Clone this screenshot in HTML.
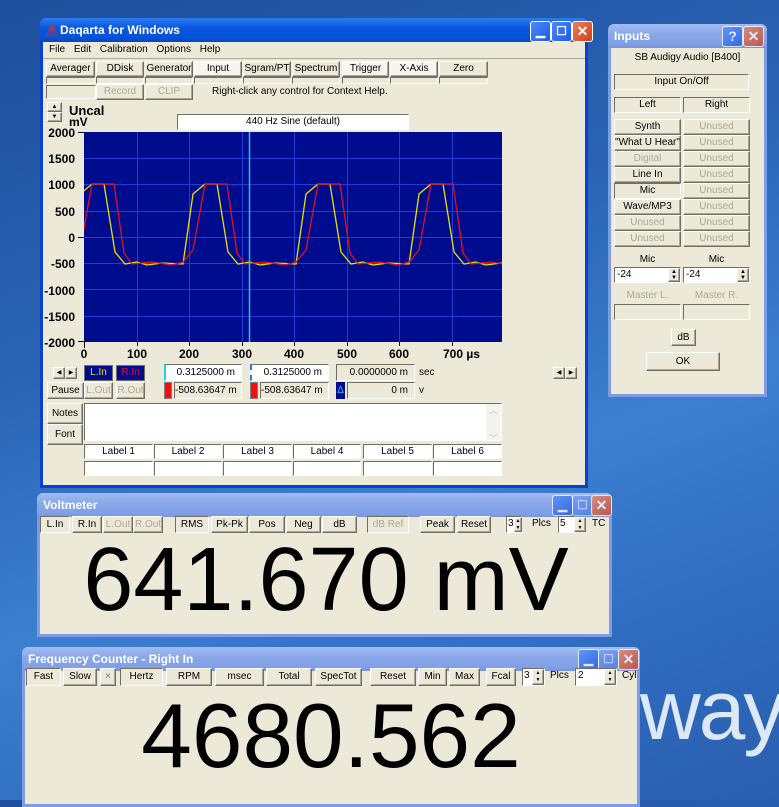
<!DOCTYPE html>
<html><head><meta charset="utf-8">
<style>
*{margin:0;padding:0;box-sizing:border-box}
body{width:779px;height:800px;overflow:hidden;position:relative;font-family:"Liberation Sans",sans-serif;font-size:10px;color:#000;
background:linear-gradient(160deg,#1e4f9c 0%,#2a63b4 35%,#3c7fd0 60%,#2f6cc0 80%,#2a5fae 100%)}
.a{position:absolute}
.win{position:absolute;background:#ece9d8;border:3px solid #0841d0;border-top:none;border-radius:6px 6px 0 0}
.iwin{border-color:#7d9ce4}
.tb{position:absolute;left:-3px;right:-3px;top:0;height:24px;border-radius:6px 6px 0 0;background:linear-gradient(#2c7cf0,#0a58e0 40%,#0550d8 85%,#0a44b8);color:#fff;font-weight:bold;font-size:12px;padding:5px 0 0 20px}
.itb{background:linear-gradient(#a2bcf0,#8aa8ea 40%,#819fe6 85%,#7894d8);color:#e4ecfa}
.b{position:absolute;background:#ece9d8;border:1px solid;border-color:#fff #716f64 #716f64 #fff;box-shadow:inset -1px -1px 0 #aca899;text-align:center;font-size:10px;line-height:14px;white-space:nowrap;overflow:hidden}
.lt{background:#f6f5ef}
.dis{color:#aca899}
.sk{position:absolute;border:1px solid;border-color:#716f64 #fff #fff #716f64;background:#ece9d8;font-size:10px;text-align:center;line-height:13px;white-space:nowrap}
.wh{background:#fff}
.cb{position:absolute;width:21px;height:21px;border:1px solid #fff;border-radius:3px;background:linear-gradient(135deg,#4d8af8,#1a5ae8);color:#fff;font-weight:bold;text-align:center;line-height:18px;font-size:14px}
.cx{background:linear-gradient(135deg,#e8805c,#d0401c)}
.icb{opacity:.75}
.yl{position:absolute;right:704px;font-weight:bold;font-size:12px;text-align:right}
.xl{position:absolute;top:347px;font-weight:bold;font-size:12px;width:40px;text-align:center}
</style></head><body>

<div class="a" style="left:640px;top:662px;font-size:84px;color:#dde8f6;letter-spacing:-2px">way</div>

<!-- MAIN WINDOW -->
<div class="win" style="left:40px;top:18px;width:548px;height:470px">
 <div class="tb">Daqarta for Windows</div>
</div>
<div class="a" style="left:45px;top:23px;width:14px;height:14px;background:linear-gradient(#e03020,#2050c0);clip-path:polygon(50% 0,100% 100%,0 100%)"></div>
<div class="cb" style="left:530px;top:21px;font-size:12px">▁</div>
<div class="cb" style="left:551px;top:21px;font-size:12px">☐</div>
<div class="cb cx" style="left:572px;top:21px">✕</div>
<div class="a" style="left:49px;top:44px;font-size:10px;word-spacing:6px">File Edit Calibration Options Help</div>
<div class="a" style="left:43px;top:58px;width:542px;height:1px;background:#aca899"></div>

<div class="b" style="left:46px;top:61px;width:49px;height:16px">Averager</div>
<div class="b" style="left:96px;top:61px;width:48px;height:16px">DDisk</div>
<div class="b" style="left:145px;top:61px;width:48px;height:16px">Generator</div>
<div class="b lt" style="left:194px;top:61px;width:48px;height:16px">Input</div>
<div class="b" style="left:243px;top:61px;width:48px;height:16px">Sgram/PT</div>
<div class="b" style="left:292px;top:61px;width:48px;height:16px">Spectrum</div>
<div class="b lt" style="left:342px;top:61px;width:47px;height:16px">Trigger</div>
<div class="b lt" style="left:390px;top:61px;width:48px;height:16px">X-Axis</div>
<div class="b" style="left:439px;top:61px;width:49px;height:16px">Zero</div>
<div class="sk" style="left:46px;top:77px;width:49px;height:7px"></div>
<div class="sk" style="left:96px;top:77px;width:48px;height:7px"></div>
<div class="sk" style="left:145px;top:77px;width:48px;height:7px"></div>
<div class="sk" style="left:194px;top:77px;width:48px;height:7px"></div>
<div class="sk" style="left:243px;top:77px;width:48px;height:7px"></div>
<div class="sk" style="left:292px;top:77px;width:48px;height:7px"></div>
<div class="sk" style="left:342px;top:77px;width:47px;height:7px"></div>
<div class="sk" style="left:390px;top:77px;width:48px;height:7px"></div>
<div class="sk" style="left:439px;top:77px;width:49px;height:7px"></div>
<div class="sk" style="left:46px;top:85px;width:50px;height:14px"></div>
<div class="b dis" style="left:96px;top:84px;width:48px;height:16px">Record</div>
<div class="b dis" style="left:145px;top:84px;width:48px;height:16px">CLIP</div>
<div class="a" style="left:212px;top:86px">Right-click any control for Context Help.</div>

<div class="b" style="left:47px;top:102px;width:15px;height:10px;font-size:6px;line-height:8px">▲</div>
<div class="b" style="left:47px;top:112px;width:15px;height:10px;font-size:6px;line-height:8px">▼</div>
<div class="a" style="left:69px;top:103px;font-weight:bold;font-size:13px">Uncal</div>
<div class="a" style="left:69px;top:115px;font-weight:bold;font-size:12px">mV</div>
<div class="sk wh" style="left:177px;top:114px;width:232px;height:16px;line-height:14px;font-size:10px">440 Hz Sine (default)</div>

<div class="yl" style="top:126px">2000</div>
<div class="yl" style="top:152px">1500</div>
<div class="yl" style="top:178px">1000</div>
<div class="yl" style="top:205px">500</div>
<div class="yl" style="top:231px">0</div>
<div class="yl" style="top:257px">-500</div>
<div class="yl" style="top:284px">-1000</div>
<div class="yl" style="top:310px">-1500</div>
<div class="yl" style="top:336px">-2000</div>

<svg class="a" style="left:0;top:0" width="779" height="800">
 <defs><clipPath id="c"><rect x="84" y="132" width="418" height="210"/></clipPath></defs>
 <rect x="84" y="132" width="418" height="210" fill="#000c8e"/>
 <g stroke="#1e3cd6" stroke-width="1">
  <path d="M84 158.5H502M84 184.5H502M84 211.5H502M84 237.5H502M84 263.5H502M84 289.5H502M84 316.5H502"/>
  <path d="M137.5 132V342M189.5 132V342M242.5 132V342M294.5 132V342M347.5 132V342M399.5 132V342M452.5 132V342"/>
 </g>
 <g stroke="#000" stroke-width="1"><path d="M78 132.5H84M78 237.5H84M78 341.5H84M84.5 342V348M137.5 342V346M189.5 342V346M242.5 342V346M294.5 342V346M347.5 342V346M399.5 342V346M452.5 342V346"/></g>
 <g clip-path="url(#c)" fill="none" stroke-width="1.3">
  <polyline stroke="#e8e000" points="60,184 70,264 80,194 92,184 104,184 115,252 125,264 137,262 147,265 162,263 183,264 193,194 205,184 217,184 228,252 238,264 250,262 260,265 275,263 296,264 306,194 318,184 330,184 341,252 351,264 363,262 373,265 388,263 409,264 419,194 431,184 443,184 454,252 464,264 476,262 486,265 501,263 522,264"/>
  <polyline stroke="#e01020" points="74,264 80,250 92,184 114,184 124,253 132,264 152,262 172,265 183,262 193,250 205,184 227,184 237,253 245,264 265,262 285,265 296,262 306,250 318,184 340,184 350,253 358,264 378,262 398,265 409,262 419,250 431,184 453,184 463,253 471,264 491,262 511,265"/>
  <path d="M249.5 132V342" stroke="#20c0e8" stroke-width="1.5"/>
 </g>
</svg>
<div class="xl" style="left:64px">0</div>
<div class="xl" style="left:117px">100</div>
<div class="xl" style="left:169px">200</div>
<div class="xl" style="left:222px">300</div>
<div class="xl" style="left:274px">400</div>
<div class="xl" style="left:327px">500</div>
<div class="xl" style="left:379px">600</div>
<div class="a" style="left:443px;top:347px;font-weight:bold;font-size:12px">700 µs</div>

<div class="b" style="left:53px;top:367px;width:12px;height:12px;font-size:6px;line-height:10px">◀</div>
<div class="b" style="left:65px;top:367px;width:12px;height:12px;font-size:6px;line-height:10px">▶</div>
<div class="b" style="left:553px;top:367px;width:12px;height:12px;font-size:6px;line-height:10px">◀</div>
<div class="b" style="left:565px;top:367px;width:12px;height:12px;font-size:6px;line-height:10px">▶</div>
<div class="a" style="left:84px;top:365px;width:29px;height:16px;background:#000c8e;color:#e8e000;text-align:center;line-height:14px;border:1px solid #716f64">L.In</div>
<div class="a" style="left:116px;top:365px;width:29px;height:16px;background:#000c8e;color:#e01020;text-align:center;line-height:14px;border:1px solid #716f64">R.In</div>
<div class="sk wh" style="left:164px;top:364px;width:78px;height:17px;text-align:right;padding-right:6px;line-height:15px;border-left:2px solid #20d0f0">0.3125000 m</div>
<div class="sk wh" style="left:250px;top:364px;width:79px;height:17px;text-align:right;padding-right:6px;line-height:15px;border-left:2px dashed #2080e0">0.3125000 m</div>
<div class="sk" style="left:336px;top:364px;width:79px;height:17px;text-align:right;padding-right:6px;line-height:15px">0.0000000 m</div>
<div class="a" style="left:419px;top:367px">sec</div>
<div class="b" style="left:47px;top:382px;width:37px;height:17px;line-height:15px">Pause</div>
<div class="b dis" style="left:84px;top:382px;width:29px;height:17px;line-height:15px">L.Out</div>
<div class="b dis" style="left:116px;top:382px;width:29px;height:17px;line-height:15px">R.Out</div>
<div class="a" style="left:164px;top:382px;width:8px;height:17px;background:#f01010;border:1px solid #808080"></div>
<div class="sk" style="left:174px;top:382px;width:68px;height:17px;text-align:right;padding-right:6px;line-height:15px">-508.63647 m</div>
<div class="a" style="left:250px;top:382px;width:8px;height:17px;background:#f01010;border:1px solid #808080"></div>
<div class="sk" style="left:260px;top:382px;width:69px;height:17px;text-align:right;padding-right:6px;line-height:15px">-508.63647 m</div>
<div class="a" style="left:336px;top:382px;width:9px;height:17px;background:#000c8e;color:#20c0f0;font-size:10px;text-align:center;line-height:17px">Δ</div>
<div class="sk" style="left:347px;top:382px;width:68px;height:17px;text-align:right;padding-right:6px;line-height:15px">0 m</div>
<div class="a" style="left:419px;top:385px">v</div>

<div class="b" style="left:47px;top:403px;width:36px;height:21px;line-height:19px">Notes</div>
<div class="b" style="left:47px;top:424px;width:36px;height:21px;line-height:19px">Font</div>
<div class="sk wh" style="left:84px;top:403px;width:418px;height:38px"></div>
<div class="a" style="left:486px;top:404px;width:15px;height:36px;background:#f4f3ee;color:#bbb;font-size:8px;text-align:center;line-height:14px">︿<br><br>﹀</div>
<div class="sk wh" style="left:84px;top:444px;width:69px;height:15px">Label 1</div>
<div class="sk wh" style="left:154px;top:444px;width:68px;height:15px">Label 2</div>
<div class="sk wh" style="left:223px;top:444px;width:69px;height:15px">Label 3</div>
<div class="sk wh" style="left:293px;top:444px;width:68px;height:15px">Label 4</div>
<div class="sk wh" style="left:363px;top:444px;width:69px;height:15px">Label 5</div>
<div class="sk wh" style="left:433px;top:444px;width:69px;height:15px">Label 6</div>
<div class="sk wh" style="left:84px;top:461px;width:69px;height:15px"></div>
<div class="sk wh" style="left:154px;top:461px;width:68px;height:15px"></div>
<div class="sk wh" style="left:223px;top:461px;width:69px;height:15px"></div>
<div class="sk wh" style="left:293px;top:461px;width:68px;height:15px"></div>
<div class="sk wh" style="left:363px;top:461px;width:69px;height:15px"></div>
<div class="sk wh" style="left:433px;top:461px;width:69px;height:15px"></div>

<!-- INPUTS -->
<div class="win iwin" style="left:608px;top:24px;width:159px;height:373px">
 <div class="tb itb" style="padding-left:6px;color:#fff">Inputs</div>
</div>
<div class="cb icb" style="left:722px;top:26px">?</div>
<div class="cb cx icb" style="left:743px;top:26px">✕</div>
<div class="a" style="left:608px;top:52px;width:159px;text-align:center;font-size:10px">SB Audigy Audio [B400]</div>
<div class="sk lt" style="left:614px;top:74px;width:135px;height:16px">Input On/Off</div>
<div class="sk lt" style="left:614px;top:97px;width:67px;height:16px">Left</div>
<div class="sk lt" style="left:683px;top:97px;width:67px;height:16px">Right</div>
<div class="b" style="left:614px;top:119px;width:67px;height:16px">Synth</div>
<div class="b" style="left:614px;top:135px;width:67px;height:16px">"What U Hear"</div>
<div class="b dis" style="left:614px;top:151px;width:67px;height:16px">Digital</div>
<div class="b" style="left:614px;top:167px;width:67px;height:16px">Line In</div>
<div class="sk lt" style="left:614px;top:183px;width:67px;height:16px">Mic</div>
<div class="b" style="left:614px;top:199px;width:67px;height:16px">Wave/MP3</div>
<div class="b dis" style="left:614px;top:215px;width:67px;height:16px">Unused</div>
<div class="b dis" style="left:614px;top:231px;width:67px;height:16px">Unused</div>
<div class="b dis" style="left:683px;top:119px;width:67px;height:16px">Unused</div>
<div class="b dis" style="left:683px;top:135px;width:67px;height:16px">Unused</div>
<div class="b dis" style="left:683px;top:151px;width:67px;height:16px">Unused</div>
<div class="b dis" style="left:683px;top:167px;width:67px;height:16px">Unused</div>
<div class="b dis" style="left:683px;top:183px;width:67px;height:16px">Unused</div>
<div class="b dis" style="left:683px;top:199px;width:67px;height:16px">Unused</div>
<div class="b dis" style="left:683px;top:215px;width:67px;height:16px">Unused</div>
<div class="b dis" style="left:683px;top:231px;width:67px;height:16px">Unused</div>
<div class="a" style="left:614px;top:254px;width:67px;text-align:center">Mic</div>
<div class="a" style="left:683px;top:254px;width:67px;text-align:center">Mic</div>
<div class="sk wh" style="left:614px;top:267px;width:67px;height:16px;text-align:left;padding-left:2px">-24</div>
<div class="b" style="left:668px;top:268px;width:12px;height:14px;font-size:6px;line-height:6px">▲<br>▼</div>
<div class="sk wh" style="left:683px;top:267px;width:67px;height:16px;text-align:left;padding-left:2px">-24</div>
<div class="b" style="left:737px;top:268px;width:12px;height:14px;font-size:6px;line-height:6px">▲<br>▼</div>
<div class="a dis" style="left:614px;top:290px;width:67px;text-align:center;font-size:10px;color:#aca899">Master L.</div>
<div class="a" style="left:683px;top:290px;width:67px;text-align:center;font-size:10px;color:#aca899">Master R.</div>
<div class="sk" style="left:614px;top:304px;width:67px;height:16px"></div>
<div class="sk" style="left:683px;top:304px;width:67px;height:16px"></div>
<div class="b" style="left:671px;top:329px;width:25px;height:17px;line-height:15px">dB</div>
<div class="b" style="left:646px;top:352px;width:74px;height:19px;line-height:17px">OK</div>

<!-- VOLTMETER -->
<div class="win iwin" style="left:37px;top:493px;width:575px;height:144px">
 <div class="tb itb" style="padding-left:6px;color:#fff">Voltmeter</div>
</div>
<div class="cb icb" style="left:552px;top:495px;font-size:12px">▁</div>
<div class="cb icb" style="left:572px;top:495px;font-size:12px;opacity:.4">☐</div>
<div class="cb cx icb" style="left:591px;top:495px">✕</div>
<div class="sk lt" style="left:40px;top:516px;width:30px;height:17px;line-height:15px">L.In</div>
<div class="b" style="left:72px;top:516px;width:30px;height:17px;line-height:15px">R.In</div>
<div class="b dis" style="left:103px;top:516px;width:30px;height:17px;line-height:15px">L.Out</div>
<div class="b dis" style="left:133px;top:516px;width:30px;height:17px;line-height:15px">R.Out</div>
<div class="sk lt" style="left:175px;top:516px;width:34px;height:17px;line-height:15px">RMS</div>
<div class="b" style="left:211px;top:516px;width:37px;height:17px;line-height:15px">Pk-Pk</div>
<div class="b" style="left:249px;top:516px;width:36px;height:17px;line-height:15px">Pos</div>
<div class="b" style="left:286px;top:516px;width:35px;height:17px;line-height:15px">Neg</div>
<div class="b" style="left:322px;top:516px;width:35px;height:17px;line-height:15px">dB</div>
<div class="sk lt dis" style="left:367px;top:516px;width:42px;height:17px;line-height:15px">dB Ref</div>
<div class="b" style="left:420px;top:516px;width:35px;height:17px;line-height:15px">Peak</div>
<div class="b" style="left:457px;top:516px;width:34px;height:17px;line-height:15px">Reset</div>
<div class="sk wh" style="left:506px;top:516px;width:16px;height:17px;text-align:left;padding-left:1px">3</div>
<div class="b" style="left:514px;top:517px;width:8px;height:15px;font-size:5px;line-height:7px">▲<br>▼</div>
<div class="a" style="left:532px;top:518px">Plcs</div>
<div class="sk wh" style="left:558px;top:516px;width:18px;height:17px;text-align:left;padding-left:1px">5</div>
<div class="b" style="left:574px;top:517px;width:12px;height:15px;font-size:5px;line-height:7px">▲<br>▼</div>
<div class="a" style="left:592px;top:518px">TC</div>
<div class="a" style="left:40px;top:530px;width:572px;text-align:center;font-size:90px;line-height:100px">641.670 mV</div>

<!-- FREQ COUNTER -->
<div class="win iwin" style="left:22px;top:647px;width:618px;height:160px">
 <div class="tb itb" style="padding-left:6px;color:#fff">Frequency Counter - Right In</div>
</div>
<div class="cb icb" style="left:578px;top:649px;font-size:12px">▁</div>
<div class="cb icb" style="left:598px;top:649px;font-size:12px;opacity:.4">☐</div>
<div class="cb cx icb" style="left:618px;top:649px">✕</div>
<div class="sk lt" style="left:26px;top:668px;width:35px;height:18px;line-height:16px">Fast</div>
<div class="b" style="left:63px;top:668px;width:34px;height:18px;line-height:16px">Slow</div>
<div class="b" style="left:100px;top:668px;width:16px;height:18px;line-height:16px;color:#777">×</div>
<div class="sk lt" style="left:120px;top:668px;width:43px;height:18px;line-height:16px">Hertz</div>
<div class="b" style="left:166px;top:668px;width:46px;height:18px;line-height:16px">RPM</div>
<div class="b" style="left:215px;top:668px;width:49px;height:18px;line-height:16px">msec</div>
<div class="b" style="left:266px;top:668px;width:46px;height:18px;line-height:16px">Total</div>
<div class="b" style="left:315px;top:668px;width:47px;height:18px;line-height:16px">SpecTot</div>
<div class="b" style="left:370px;top:668px;width:46px;height:18px;line-height:16px">Reset</div>
<div class="b" style="left:418px;top:668px;width:29px;height:18px;line-height:16px">Min</div>
<div class="b" style="left:449px;top:668px;width:31px;height:18px;line-height:16px">Max</div>
<div class="b" style="left:486px;top:668px;width:30px;height:18px;line-height:16px">Fcal</div>
<div class="sk wh" style="left:522px;top:668px;width:23px;height:18px;text-align:left;padding-left:1px">3</div>
<div class="b" style="left:532px;top:669px;width:12px;height:16px;font-size:5px;line-height:7px">▲<br>▼</div>
<div class="a" style="left:550px;top:670px">Plcs</div>
<div class="sk wh" style="left:575px;top:668px;width:42px;height:18px;text-align:left;padding-left:2px">2</div>
<div class="b" style="left:604px;top:669px;width:12px;height:16px;font-size:5px;line-height:7px">▲<br>▼</div>
<div class="a" style="left:622px;top:670px">Cyl</div>
<div class="a" style="left:22px;top:687px;width:618px;text-align:center;font-size:91px;line-height:100px">4680.562</div>

</body></html>
